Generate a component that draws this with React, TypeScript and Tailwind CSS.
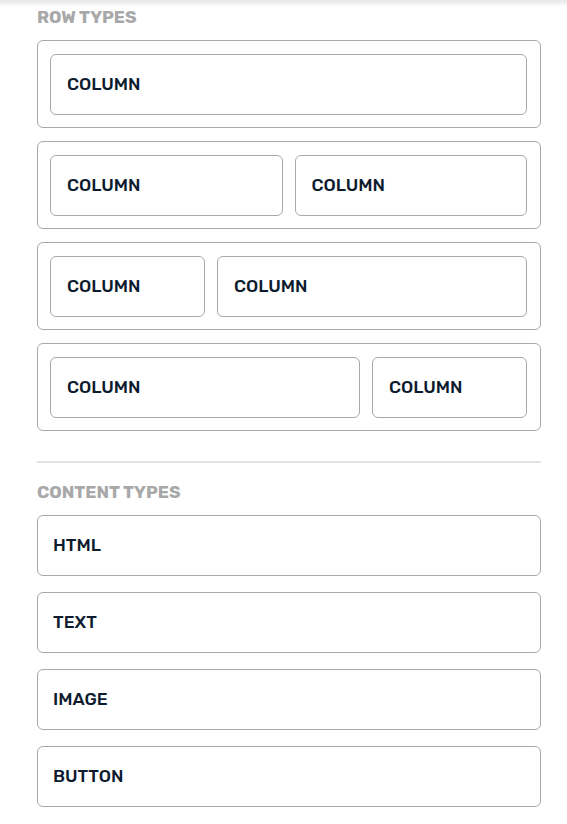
import React from 'react';

const font = { fontFamily: 'Rubik, Inter, "Noto Sans", sans-serif' };

function Column({ flex }: { flex: string }) {
  return (
    <div
      className={`${flex} h-[61px] flex items-center px-4 border border-[#a9a9a9] rounded-[6px] text-[17.6px] font-medium text-[#0d1b2e]`}
    >
      COLUMN
    </div>
  );
}

function Row({ children }: { children: React.ReactNode }) {
  return (
    <div className="flex gap-3 pt-[13px] pb-[12px] pl-[12px] pr-[13px] border border-[#a9a9a9] rounded-[6px]">
      {children}
    </div>
  );
}

function ContentItem({ label }: { label: string }) {
  return (
    <div className="h-[61px] flex items-center px-[15px] border border-[#a9a9a9] rounded-[6px] text-[17.6px] font-medium text-[#0d1b2e]">
      {label}
    </div>
  );
}

export default function App() {
  return (
    <div className="min-h-screen bg-white" style={font}>
      <div className="h-[7px] bg-gradient-to-b from-[#e6e6e6] to-white" />
      <div className="ml-[37px] w-[504px]">
        <div className="text-[17.5px] leading-[20px] font-bold text-[#a8a8a8]">ROW TYPES</div>
        <div className="mt-[13px] flex flex-col gap-[13px]">
          <Row>
            <Column flex="flex-1" />
          </Row>
          <Row>
            <Column flex="flex-1" />
            <Column flex="flex-1" />
          </Row>
          <Row>
            <Column flex="w-[155px] shrink-0" />
            <Column flex="flex-1" />
          </Row>
          <Row>
            <Column flex="flex-1" />
            <Column flex="w-[155px] shrink-0" />
          </Row>
        </div>
        <div className="mt-[30px] h-[2px] bg-[#e2e2e2]" />
        <div className="mt-[19px] text-[17.5px] leading-[20px] font-bold text-[#a8a8a8]">CONTENT TYPES</div>
        <div className="mt-[13px] flex flex-col gap-[16px]">
          <ContentItem label="HTML" />
          <ContentItem label="TEXT" />
          <ContentItem label="IMAGE" />
          <ContentItem label="BUTTON" />
        </div>
      </div>
    </div>
  );
}
